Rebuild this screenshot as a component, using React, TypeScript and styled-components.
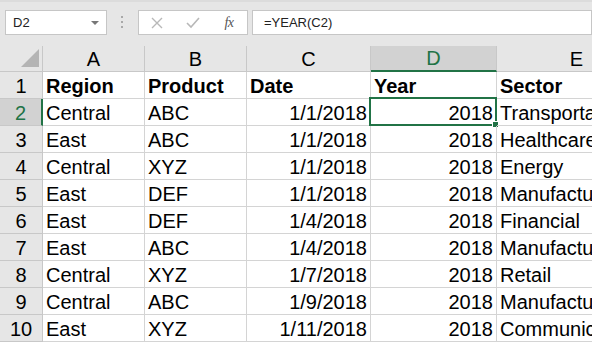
import React from 'react';
import styled, { createGlobalStyle } from 'styled-components';

const GlobalStyle = createGlobalStyle`
  html, body {
    margin: 0;
    padding: 0;
    background: #ffffff;
    overflow: hidden;
  }
`;

const Window = styled.div`
  width: 592px;
  height: 342px;
  overflow: hidden;
  display: flex;
  flex-direction: column;
  font-family: 'Liberation Sans', Arial, sans-serif;
  background: #ffffff;
`;

const FormulaBar = styled.div`
  height: 46px;
  flex: 0 0 46px;
  box-sizing: border-box;
  background: #e6e6e6;
  border-top: 2px solid #dcdcdc;
  display: flex;
  align-items: flex-start;
  padding: 8px 0 0 5px;
`;

const Box = styled.div<{ $width?: number }>`
  height: 25px;
  box-sizing: border-box;
  background: #ffffff;
  border: 1px solid #c6c6c6;
  display: flex;
  align-items: center;
  width: ${(p) => (p.$width ? `${p.$width}px` : 'auto')};
  flex: ${(p) => (p.$width ? '0 0 auto' : '1 1 auto')};
`;

const NameText = styled.span`
  font-size: 13px;
  color: #222;
  padding-left: 7px;
  flex: 1;
`;

const DropArrow = styled.span`
  width: 0;
  height: 0;
  border-left: 4px solid transparent;
  border-right: 4px solid transparent;
  border-top: 4px solid #777;
  margin-right: 7px;
`;

const Grip = styled.div<{ $width?: number }>`
  width: ${(p) => p.$width ?? 31}px;
  height: 25px;
  display: flex;
  justify-content: center;
  align-items: center;
  svg {
    display: block;
  }
`;

const IconSlot = styled.div`
  width: 36px;
  height: 23px;
  display: flex;
  align-items: center;
  justify-content: center;
`;

const Fx = styled.span`
  font-family: 'Liberation Serif', 'Times New Roman', serif;
  font-style: italic;
  font-size: 14px;
  color: #555;
  letter-spacing: -0.5px;
`;

const FormulaText = styled.span`
  font-size: 13px;
  color: #222;
  padding-left: 11px;
`;

const Sheet = styled.div`
  display: grid;
  grid-template-columns: 43px 102px 102px 124px 126px 160px;
  grid-template-rows: 26px repeat(10, 27px);
  font-size: 20px;
  line-height: 23px;
`;

const Cell = styled.div<{ $align?: 'left' | 'right'; $bold?: boolean }>`
  position: relative;
  box-sizing: border-box;
  border-right: 1px solid #d4d4d4;
  border-bottom: 1px solid #d4d4d4;
  display: flex;
  align-items: flex-end;
  justify-content: ${(p) => (p.$align === 'right' ? 'flex-end' : 'flex-start')};
  padding: 0 3px 0 3px;
  white-space: nowrap;
  color: #000;
  font-weight: ${(p) => (p.$bold ? 700 : 400)};
`;

const Header = styled.div<{ $active?: boolean; $side?: 'row' | 'col' }>`
  box-sizing: border-box;
  background: ${(p) => (p.$active ? '#d2d2d2' : '#e6e6e6')};
  color: ${(p) => (p.$active ? '#217346' : '#000')};
  border-right: ${(p) =>
    p.$side === 'row' && p.$active ? '2px solid #217346' : '1px solid #c8c8c8'};
  border-bottom: ${(p) =>
    p.$side === 'col' && p.$active ? '2px solid #217346' : '1px solid #c8c8c8'};
  display: flex;
  align-items: flex-end;
  justify-content: center;
  margin-bottom: ${(p) => (p.$side === 'col' && p.$active ? '0' : '0')};
`;

const Corner = styled.div`
  box-sizing: border-box;
  background: #e6e6e6;
  border-right: 1px solid #c8c8c8;
  border-bottom: 1px solid #c8c8c8;
  display: flex;
  justify-content: flex-end;
  align-items: flex-end;
  padding: 0 3px 4px 0;
`;

const Triangle = styled.div`
  width: 0;
  height: 0;
  border-left: 18px solid transparent;
  border-bottom: 18px solid #b4b4b4;
`;

const Selection = styled.div`
  position: absolute;
  left: -2px;
  top: -2px;
  right: -1px;
  bottom: -1px;
  border: 2px solid #217346;
  pointer-events: none;
`;

const Handle = styled.div`
  position: absolute;
  right: -4px;
  bottom: -4px;
  width: 5px;
  height: 5px;
  background: #217346;
  border: 1px solid #ffffff;
`;

const columns = ['A', 'B', 'C', 'D', 'E'];
const align: ('left' | 'right')[] = ['left', 'left', 'right', 'right', 'left'];

const rows = [
  ['Region', 'Product', 'Date', 'Year', 'Sector'],
  ['Central', 'ABC', '1/1/2018', '2018', 'Transportation'],
  ['East', 'ABC', '1/1/2018', '2018', 'Healthcare'],
  ['Central', 'XYZ', '1/1/2018', '2018', 'Energy'],
  ['East', 'DEF', '1/1/2018', '2018', 'Manufacturing'],
  ['East', 'DEF', '1/4/2018', '2018', 'Financial'],
  ['East', 'ABC', '1/4/2018', '2018', 'Manufacturing'],
  ['Central', 'XYZ', '1/7/2018', '2018', 'Retail'],
  ['Central', 'ABC', '1/9/2018', '2018', 'Manufacturing'],
  ['East', 'XYZ', '1/11/2018', '2018', 'Communications'],
];

const App = () => {
  return (
    <Window>
      <GlobalStyle />
      <FormulaBar>
        <Box $width={102}>
          <NameText>D2</NameText>
          <DropArrow />
        </Box>
        <Grip>
          <svg width="3" height="13" viewBox="0 0 3 13">
            <rect x="0" y="0" width="2" height="2" fill="#a8a8a8" />
            <rect x="0" y="5" width="2" height="2" fill="#a8a8a8" />
            <rect x="0" y="10" width="2" height="2" fill="#a8a8a8" />
          </svg>
        </Grip>
        <Box $width={110}>
          <IconSlot>
            <svg width="12" height="12" viewBox="0 0 12 12">
              <path d="M1 1 L11 11 M11 1 L1 11" stroke="#b8b8b8" strokeWidth="1.4" />
            </svg>
          </IconSlot>
          <IconSlot>
            <svg width="14" height="12" viewBox="0 0 14 12">
              <path d="M1 6 L5 10 L13 1" stroke="#b8b8b8" strokeWidth="1.6" fill="none" />
            </svg>
          </IconSlot>
          <IconSlot>
            <Fx>fx</Fx>
          </IconSlot>
        </Box>
        <Grip $width={4} />
        <Box>
          <FormulaText>=YEAR(C2)</FormulaText>
        </Box>
      </FormulaBar>
      <Sheet>
        <Corner>
          <Triangle />
        </Corner>
        {columns.map((c) => (
          <Header key={c} $side="col" $active={c === 'D'}>
            {c}
          </Header>
        ))}
        {rows.map((r, i) => (
          <React.Fragment key={i}>
            <Header $side="row" $active={i === 1}>
              {i + 1}
            </Header>
            {r.map((v, j) => (
              <Cell key={j} $align={i === 0 ? 'left' : align[j]} $bold={i === 0}>
                {v}
                {i === 1 && j === 3 && (
                  <Selection>
                    <Handle />
                  </Selection>
                )}
              </Cell>
            ))}
          </React.Fragment>
        ))}
      </Sheet>
    </Window>
  );
};

export default App;
